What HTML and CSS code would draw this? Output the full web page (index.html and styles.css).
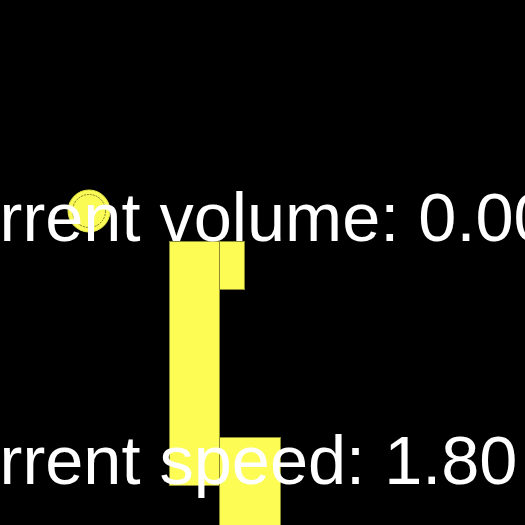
FILE: index.html
```html
<!DOCTYPE html>
<html>
<head>
<meta charset="utf-8">
<link rel="stylesheet" href="styles.css">
</head>
<body>
<div class="stage">
  <div class="block block-a"></div>
  <div class="block block-b"></div>
  <div class="block block-c"></div>
  <svg class="ball" width="46" height="46" viewBox="0 0 46 46">
    <circle cx="23" cy="23" r="21" fill="#fbfb55" stroke="#e6e64a" stroke-width="1"/>
    <circle cx="23" cy="23" r="16.5" fill="none" stroke="#6e6e26" stroke-width="0.9" stroke-dasharray="2 1"/>
  </svg>
  <div class="line line-volume">Current volume: 0.00</div>
  <div class="line line-speed">Current speed: 1.80</div>
</div>
</body>
</html>
```
FILE: styles.css
```css
html, body {
  margin: 0;
  padding: 0;
  background: #000;
  overflow: hidden;
}
.stage {
  position: relative;
  width: 525px;
  height: 525px;
  overflow: hidden;
  padding-top: 185px;
  box-sizing: border-box;
  font-family: "Liberation Sans", Arial, sans-serif;
  color: #fff;
}
.line {
  position: relative;
  z-index: 2;
  font-size: 68.5px;
  line-height: 66px;
  white-space: nowrap;
  margin-left: -88px;
}
.line-speed {
  margin-top: 177px;
}
.block {
  position: absolute;
  background: #fcfc55;
  border: 1px solid #8c8c30;
  box-sizing: border-box;
  z-index: 1;
}
.block-a { left: 169px; top: 241px; width: 51px; height: 245px; }
.block-b { left: 219px; top: 241px; width: 26px; height: 49px; }
.block-c { left: 219px; top: 437px; width: 62px; height: 100px; }
.ball {
  position: absolute;
  left: 66px;
  top: 188px;
  z-index: 1;
}
```
